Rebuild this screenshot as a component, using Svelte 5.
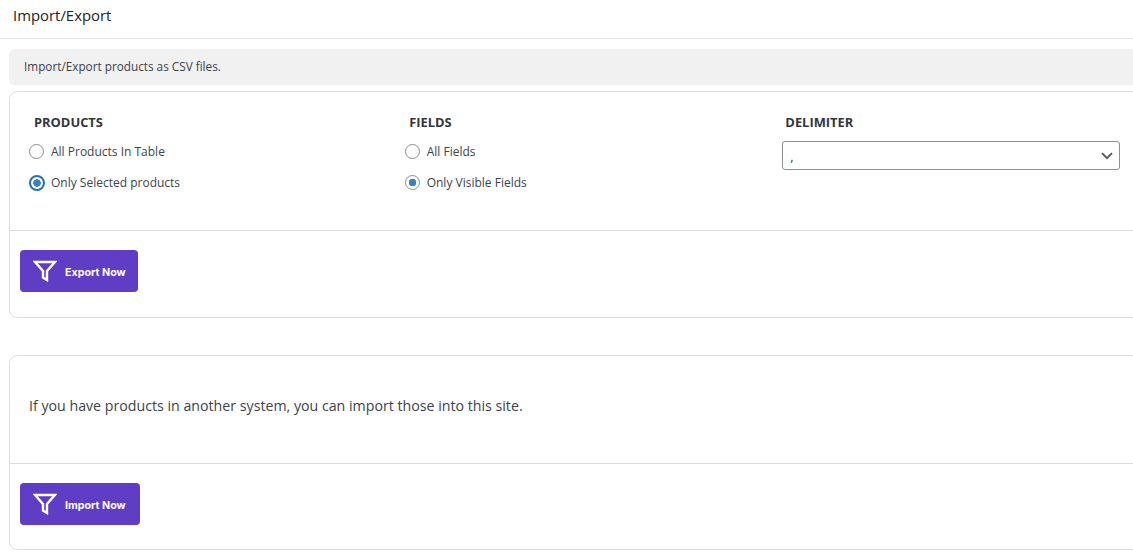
<script>
  const groups = [
    { title: 'PRODUCTS', name: 'products', options: ['All Products In Table', 'Only Selected products'], selected: 1 },
    { title: 'FIELDS', name: 'fields', options: ['All Fields', 'Only Visible Fields'], selected: 1 }
  ];
</script>

{#snippet funnel()}
  <svg class="funnel" width="24" height="22" viewBox="0 0 24 22" fill="none" stroke="#fff" stroke-width="2.4">
    <path d="M2 2h20l-8 9v9l-4-2.5V11z" stroke-linejoin="miter" />
  </svg>
{/snippet}

<div class="page">
  <header class="top">Import/Export</header>
  <div class="content">
    <div class="notice">Import/Export products as CSV files.</div>

    <section class="card export">
      <div class="card-body columns">
        {#each groups as group, g}
          <div class="col" class:second={g === 1}>
            <h4>{group.title}</h4>
            {#each group.options as opt, i}
              <label class="radio" class:big={g === 0 && i === 1}>
                <span class="dot" class:on={i === group.selected}></span>
                {opt}
              </label>
            {/each}
          </div>
        {/each}
        <div class="col delimiter">
          <h4>DELIMITER</h4>
          <div class="select">
            <span>,</span>
            <svg width="12" height="8" viewBox="0 0 12 8" fill="none" stroke="#50575e" stroke-width="1.8"><path d="M1 1.2l5 5 5-5" /></svg>
          </div>
        </div>
      </div>
      <div class="card-foot">
        <button class="btn export-btn">{@render funnel()}Export Now</button>
      </div>
    </section>

    <section class="card import">
      <div class="card-body intro">If you have products in another system, you can import those into this site.</div>
      <div class="card-foot">
        <button class="btn import-btn">{@render funnel()}Import Now</button>
      </div>
    </section>
  </div>
</div>

<style>
  :global(body) {
    margin: 0;
    background: #fff;
    overflow: hidden;
  }
  .page {
    width: 1133px;
    height: 555px;
    overflow: hidden;
    font-family: "Open Sans", "Noto Sans", sans-serif;
    color: #3c434a;
  }
  .top {
    height: 38px;
    box-sizing: content-box;
    padding-left: 13px;
    border-bottom: 1px solid #e6e6e6;
    font-size: 14.9px;
    line-height: 30px;
    color: #1d2327;
  }
  .content {
    width: 1150px;
    padding: 10px 0 0 9px;
  }
  .notice {
    height: 36px;
    padding-left: 15px;
    border-radius: 6px;
    background: #f1f1f1;
    font-size: 11.75px;
    line-height: 34px;
  }
  .card {
    margin-top: 6px;
    border: 1px solid #dcdcdc;
    border-radius: 8px;
    box-sizing: border-box;
  }
  .export {
    height: 227px;
  }
  .import {
    height: 195px;
    margin-top: 37px;
  }
  .card-body {
    box-sizing: border-box;
    border-bottom: 1px solid #dcdcdc;
  }
  .columns {
    display: flex;
    height: 139px;
    padding: 21px 0 0 20px;
  }
  .col {
    width: 376px;
  }
  .col.second {
    width: 372px;
  }
  .col h4 {
    margin: 0 0 0 4px;
    font-size: 12.9px;
    font-weight: 700;
    line-height: 18px;
    color: #32373c;
  }
  .col.second h4 {
    margin-left: 3.5px;
  }
  .radio {
    display: flex;
    align-items: center;
    gap: 7px;
    height: 31px;
    font-size: 12px;
    margin-left: -1px;
  }
  .radio:first-of-type {
    margin-top: 5px;
  }
  .dot {
    box-sizing: border-box;
    width: 15px;
    height: 15px;
    border: 1px solid #8c8f94;
    border-radius: 50%;
    flex: none;
  }
  .dot.on {
    border-color: #8c8f94;
    background: radial-gradient(circle, #3582c4 0 3.5px, #fff 4px);
  }
  .big .dot {
    width: 16px;
    height: 16px;
    margin-right: -1px;
    border: 2px solid #2271b1;
  }
  .delimiter {
    margin-left: 5px;
  }
  .delimiter h4 {
    margin-left: 3px;
  }
  .select {
    display: flex;
    justify-content: space-between;
    align-items: center;
    box-sizing: border-box;
    width: 338px;
    height: 29px;
    margin-top: 10px;
    padding: 0 6px 0 7px;
    border: 1px solid #8c8f94;
    border-radius: 3px;
    font-size: 13px;
  }
  .card-foot {
    padding: 19px 0 0 10px;
  }
  .btn {
    display: flex;
    align-items: center;
    gap: 8px;
    height: 42px;
    padding: 3px 0 0 13px;
    border: 0;
    border-radius: 4px;
    background: #5f3dc4;
    color: #fff;
    font-family: Inter, Roboto, sans-serif;
    font-size: 10.7px;
    font-weight: 700;
  }
  .funnel {
    margin-top: -4px;
  }
  .export-btn {
    width: 118px;
  }
  .import-btn {
    width: 120px;
  }
  .intro {
    height: 108px;
    padding: 40px 0 0 19px;
    font-size: 14.2px;
    line-height: 20px;
  }
</style>
